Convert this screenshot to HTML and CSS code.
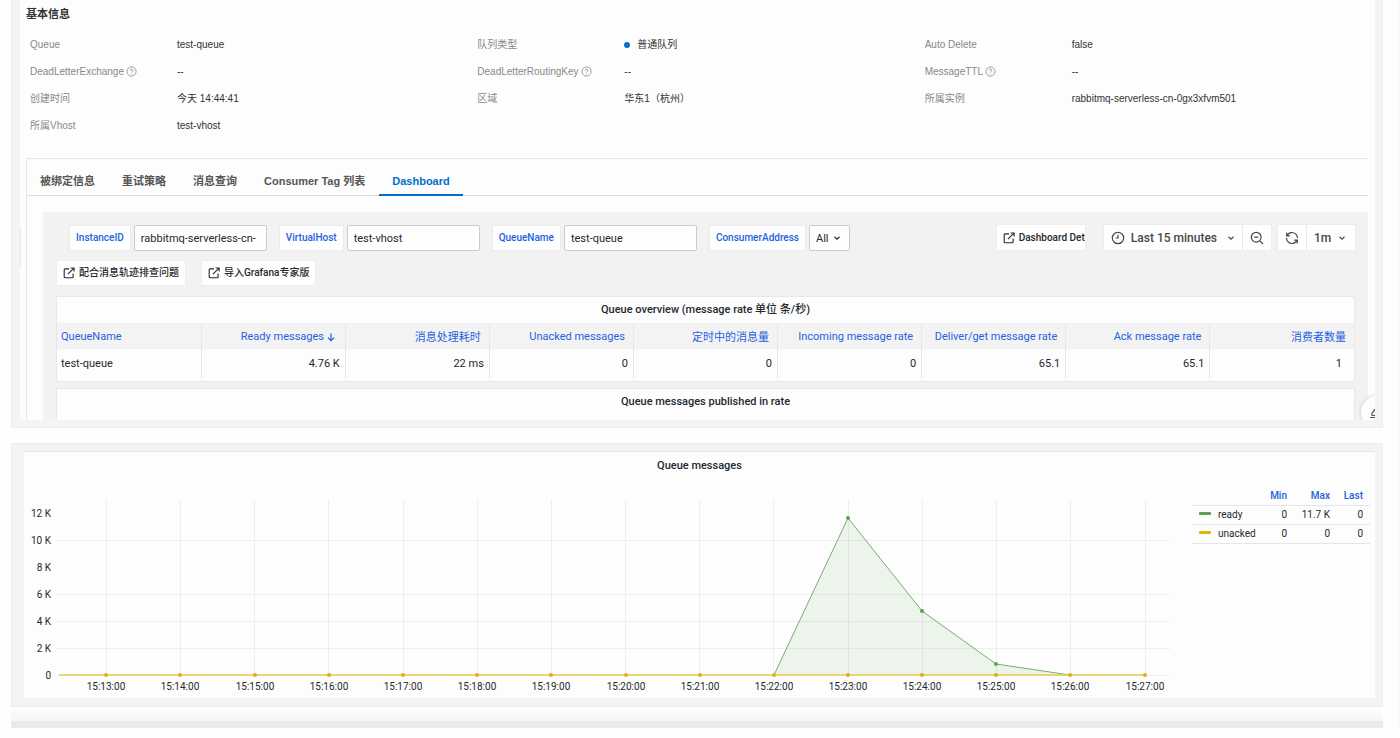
FILE: index.html
```html
<!DOCTYPE html>
<html lang="zh-CN">
<head>
<meta charset="utf-8">
<title>Queue Dashboard</title>
<link rel="stylesheet" href="styles.css">
</head>
<body>
<svg class="defs" width="0" height="0" aria-hidden="true">
  <symbol id="help" viewBox="0 0 12 12"><circle cx="6" cy="6" r="5"/><path d="M4.500 4.900c0-1.900 3-1.900 3 0 0 1-1.500 1.100-1.500 2.100M6 8.100v.8"/></symbol>
  <symbol id="ext" viewBox="0 0 12 12"><path d="M6 1.900H2.200c-.6 0-1 .4-1 1v6.900c0 .6.4 1 1 1h6.900c.6 0 1-.4 1-1V6.400M7.600 1h3.500v3.500M11 1.100 4.900 7.200"/></symbol>
  <symbol id="chev" viewBox="0 0 8 8"><path d="M1.500 2.800 4 5.200l2.500-2.400"/></symbol>
  <symbol id="clock" viewBox="0 0 14 14"><circle cx="7" cy="7" r="5.700"/><path d="M7 3.700V7H4.600"/></symbol>
  <symbol id="zoomout" viewBox="0 0 14 14"><circle cx="6.200" cy="6.200" r="4.900"/><path d="M4.200 6.200h4M9.800 9.800l3.200 3.200"/></symbol>
  <symbol id="sync" viewBox="0 0 14 14"><path d="M1.700 1.500v3.300h3.200M2 4.700C3.800.9 9 .4 11.500 3.800c.7 1 1 2 1 3.200M12.300 12.500V9.200H9.100M12 9.300C10.200 13.100 5 13.600 2.500 10.200c-.7-1-1-2-1-3.200"/></symbol>
</svg>
<div class="page">
  <main class="frame frame-top">
    <div class="sheet">
      <h1 class="title">基本信息</h1>
      <dl class="info">
        <div class="pair"><dt>Queue</dt><dd>test-queue</dd></div>
        <div class="pair"><dt>队列类型</dt><dd><i class="status"></i>普通队列</dd></div>
        <div class="pair"><dt>Auto Delete</dt><dd>false</dd></div>
        <div class="pair"><dt>DeadLetterExchange <svg class="icon icon-help"><use href="#help"/></svg></dt><dd>--</dd></div>
        <div class="pair"><dt>DeadLetterRoutingKey <svg class="icon icon-help"><use href="#help"/></svg></dt><dd>--</dd></div>
        <div class="pair"><dt>MessageTTL <svg class="icon icon-help"><use href="#help"/></svg></dt><dd>--</dd></div>
        <div class="pair"><dt>创建时间</dt><dd>今天 14:44:41</dd></div>
        <div class="pair"><dt>区域</dt><dd>华东1（杭州）</dd></div>
        <div class="pair"><dt>所属实例</dt><dd>rabbitmq-serverless-cn-0gx3xfvm501</dd></div>
        <div class="pair"><dt>所属Vhost</dt><dd>test-vhost</dd></div>
      </dl>
      <section class="card">
        <nav class="tabs" role="tablist">
          <button class="tab" role="tab">被绑定信息</button>
          <button class="tab" role="tab">重试策略</button>
          <button class="tab" role="tab">消息查询</button>
          <button class="tab" role="tab">Consumer Tag 列表</button>
          <button class="tab tab-on" role="tab" aria-selected="true">Dashboard</button>
        </nav>
        <div class="grafana">
          <div class="toolbar">
            <div class="vars">
              <div class="var"><label for="v1">InstanceID</label><input id="v1" value="rabbitmq-serverless-cn-"></div>
              <div class="var"><label for="v2">VirtualHost</label><input id="v2" value="test-vhost"></div>
              <div class="var"><label for="v3">QueueName</label><input id="v3" value="test-queue"></div>
              <div class="var"><label for="v4">ConsumerAddress</label><span class="pick pick-box"><select id="v4"><option>All</option></select><svg class="icon icon-chev"><use href="#chev"/></svg></span></div>
            </div>
            <div class="tools">
              <a class="link link-cut" href="#"><svg class="icon icon-ext"><use href="#ext"/></svg>Dashboard Det</a>
              <div class="group">
                <button class="tool tool-time"><svg class="icon icon-tool"><use href="#clock"/></svg>Last 15 minutes<svg class="icon icon-chev"><use href="#chev"/></svg></button>
                <button class="tool" aria-label="Zoom out"><svg class="icon icon-tool"><use href="#zoomout"/></svg></button>
              </div>
              <div class="group">
                <button class="tool" aria-label="Refresh"><svg class="icon icon-tool"><use href="#sync"/></svg></button>
                <span class="pick"><select aria-label="Refresh interval"><option>1m</option></select><svg class="icon icon-chev"><use href="#chev"/></svg></span>
              </div>
            </div>
          </div>
          <div class="links">
            <a class="link" href="#"><svg class="icon icon-ext"><use href="#ext"/></svg>配合消息轨迹排查问题</a>
            <a class="link" href="#"><svg class="icon icon-ext"><use href="#ext"/></svg>导入Grafana专家版</a>
          </div>
          <section class="panel panel-table">
            <h2 class="panel-title">Queue overview (message rate 单位 条/秒)</h2>
            <table class="overview">
              <thead><tr><th>QueueName</th><th>Ready messages <svg class="icon icon-sort" viewBox="0 0 8 10"><path d="M4 1.500v7M1 5.700l3 3 3-3"/></svg></th><th>消息处理耗时</th><th>Unacked messages</th><th>定时中的消息量</th><th>Incoming message rate</th><th>Deliver/get message rate</th><th>Ack message rate</th><th>消费者数量</th></tr></thead>
              <tbody><tr><td>test-queue</td><td>4.76 K</td><td>22 ms</td><td>0</td><td>0</td><td>0</td><td>65.1</td><td>65.1</td><td>1</td></tr></tbody>
            </table>
          </section>
          <section class="panel panel-cut">
            <h2 class="panel-title">Queue messages published in rate</h2>
          </section>
        </div>
      </section>
      <span class="handle"></span>
      <button class="float" aria-label="Feedback"><svg class="icon icon-float" viewBox="0 0 14 14"><path d="M1 12.500h12M3 10.500V8l5.500-6.500 3 2.500L6 10.500z"/></svg></button>
    </div>
  </main>

  <section class="frame frame-chart">
    <div class="chart-panel">
      <h2 class="panel-title">Queue messages</h2>
      <div class="chart-body">
        <svg class="chart" viewBox="0 0 1161 216" role="img" aria-label="Queue messages">
          <path class="grid" d="M33 60.500H1146M33 114.500H1146M33 141.500H1146M33 168.500H1146M33 195.500H1146M82.500 20V195M156.500 20V195M230.500 20V195M304.500 20V195M379.500 20V195M453.500 20V195M527.500 20V195M601.500 20V195M675.500 20V195M749.500 20V195M824.500 20V195M898.500 20V195M972.500 20V195M1046.500 20V195M1121.500 20V195"/>
          <path class="area" d="M750 195 824 38 898 131 972 184 1046 195z"/>
          <path class="line-ready" d="M750 195 824 38 898 131 972 184 1046 195"/>
          <g class="dots-ready"><circle cx="824" cy="38" r="2"/><circle cx="898" cy="131" r="2"/><circle cx="972" cy="184" r="2"/></g>
          <path class="line-unacked" d="M35 195H1121"/>
          <g class="dots-unacked"><circle cx="82" cy="195" r="2"/><circle cx="156" cy="195" r="2"/><circle cx="231" cy="195" r="2"/><circle cx="305" cy="195" r="2"/><circle cx="379" cy="195" r="2"/><circle cx="453" cy="195" r="2"/><circle cx="527" cy="195" r="2"/><circle cx="602" cy="195" r="2"/><circle cx="676" cy="195" r="2"/><circle cx="750" cy="195" r="2"/><circle cx="824" cy="195" r="2"/><circle cx="898" cy="195" r="2"/><circle cx="972" cy="195" r="2"/><circle cx="1046" cy="195" r="2"/><circle cx="1121" cy="195" r="2"/></g>
          <g class="axis axis-y"><text x="27" y="37">12 K</text><text x="27" y="64">10 K</text><text x="27" y="91">8 K</text><text x="27" y="118">6 K</text><text x="27" y="145">4 K</text><text x="27" y="172">2 K</text><text x="27" y="199">0</text></g>
          <g class="axis axis-x"><text x="82" y="210">15:13:00</text><text x="156" y="210">15:14:00</text><text x="231" y="210">15:15:00</text><text x="305" y="210">15:16:00</text><text x="379" y="210">15:17:00</text><text x="453" y="210">15:18:00</text><text x="527" y="210">15:19:00</text><text x="602" y="210">15:20:00</text><text x="676" y="210">15:21:00</text><text x="750" y="210">15:22:00</text><text x="824" y="210">15:23:00</text><text x="898" y="210">15:24:00</text><text x="972" y="210">15:25:00</text><text x="1046" y="210">15:26:00</text><text x="1121" y="210">15:27:00</text></g>
        </svg>
        <table class="legend">
          <thead><tr><th></th><th>Min</th><th>Max</th><th>Last</th></tr></thead>
          <tbody>
            <tr><td><i class="swatch swatch-ready"></i>ready</td><td>0</td><td>11.7 K</td><td>0</td></tr>
            <tr><td><i class="swatch swatch-unacked"></i>unacked</td><td>0</td><td>0</td><td>0</td></tr>
          </tbody>
        </table>
      </div>
    </div>
  </section>
  <div class="fade"></div>
  <div class="strip"></div>
</div>
</body>
</html>
```
FILE: styles.css
```css
* { box-sizing: border-box; }
body { margin: 0; background: #fefefe; color: #2b2d31; font-family: "Liberation Sans", "Noto Sans CJK SC", sans-serif; font-size: 10px; }
h1, h2, dl, dd { margin: 0; }
button, input, select { font: inherit; color: inherit; margin: 0; }
.defs { position: absolute; }
.icon { fill: none; stroke: currentColor; stroke-width: 1.2; flex: none; }
.page { margin-right: 1px; padding: 0 15px 0 11px; border-right: 1px solid #f3f3f5; }

.frame { background: #f4f4f4; border: 1px solid #ededed; }
.frame-top { border-top: 0; padding: 0 7px 7px 8px; }
.sheet { position: relative; overflow: hidden; background: #fdfdfd; padding: 5px 7px 0 6px; }
.title { font-size: 11px; line-height: 18px; font-weight: 700; color: #333; }
.info { display: grid; grid-template-columns: repeat(3, 1fr); grid-auto-rows: 27px; padding: 8px 0 0 4px; margin-right: -4px; }
.pair { display: flex; align-items: center; line-height: 16px; }
.pair dt { flex: 0 0 147px; display: flex; align-items: center; gap: 2px; color: #888; }
.pair dd { display: flex; align-items: center; color: #333; }
.icon-help { width: 11px; height: 11px; stroke-width: 0.9; }
.status { width: 6px; height: 6px; border-radius: 50%; background: #0a6ccc; margin-right: 7px; }

.card { margin-top: 19px; border-top: 1px solid #e4e4e4; border-left: 1px solid #e6e6e6; }
.tabs { display: flex; gap: 1px; height: 37px; border-bottom: 1px solid #dedede; }
.tab { height: 37px; padding: 9px 13px 0; border: 0; border-bottom: 2px solid transparent; background: none; font-size: 11px; line-height: 26px; font-weight: 700; color: #555; }
.tab-on { color: #0070cc; border-bottom-color: #0070cc; }

.grafana { margin: 16px 0 0 16px; padding: 13px 13px 0 14px; background: #f2f2f2; font-family: Roboto, "Noto Sans CJK SC", sans-serif; font-size: 11px; color: #24292e; }
.toolbar { display: flex; justify-content: space-between; }
.vars { display: flex; gap: 12px; padding-left: 12px; }
.var { display: flex; gap: 3px; }
.var label { height: 26px; padding: 0 6px; border: 1px solid #ebebeb; background: #fefefe; font-size: 10px; line-height: 24px; font-weight: 500; color: #1f62e0; }
.var input { width: 133px; height: 26px; padding: 0 6px; border: 1px solid #ccc; border-radius: 2px; background: #fefefe; }
.pick { position: relative; display: flex; }
.pick select { appearance: none; height: 25px; padding: 0 23px 0 7px; border: 0; background: #fefefe; color: #45484c; font-size: 12px; font-weight: 500; }
.pick-box select { height: 26px; padding: 0 20px 0 6px; border: 1px solid #ccc; border-radius: 2px; font-size: 11px; font-weight: 400; color: #24292e; }
.pick .icon-chev { position: absolute; right: 9px; top: 9px; pointer-events: none; }
.icon-chev { width: 8px; height: 8px; }
.tools { display: flex; gap: 7px; color: #45484c; }
.link { display: inline-flex; align-items: center; gap: 4px; height: 24px; padding: 0 6px; background: #fefefe; box-shadow: 0 0 1px #d8d8d8; font-size: 10px; line-height: 12px; font-weight: 500; color: #24292e; text-decoration: none; white-space: nowrap; }
.link-cut { height: 25px; padding-right: 0; margin-right: 12px; }
.icon-ext { width: 12px; height: 12px; stroke-width: 1.1; }
.group { display: flex; height: 25px; box-shadow: 0 0 1px #ccc; }
.tool { display: flex; align-items: center; padding: 0 7px; border: 0; border-right: 1px solid #e8e8e8; background: #fefefe; font-size: 12px; font-weight: 500; }
.group .tool:last-child { border-right: 0; }
.tool-time { gap: 6px; }
.tool-time .icon-chev { margin-left: 4px; }
.icon-tool { width: 14px; height: 14px; }
.links { display: flex; gap: 17px; margin: 10px 0 11px; }

.panel { background: #fdfdfd; border: 1px solid #e8e8e8; border-radius: 2px; margin-left: -1px; }
.panel-table { padding-bottom: 3px; }
.panel-title { font-family: Roboto, "Noto Sans CJK SC", sans-serif; font-size: 11px; line-height: 26px; font-weight: 500; text-align: center; color: #24292e; }
.panel-cut { margin-top: 6px; border-bottom: 0; padding-bottom: 5px; }
.overview { width: 100%; table-layout: fixed; border-collapse: collapse; }
.overview th, .overview td { border-right: 1px solid #e6e6e6; text-align: right; white-space: nowrap; }
.overview th { height: 26px; padding: 0 8px 0 0; background: #f3f3f3; font-weight: 400; color: #1f62e0; }
.overview td { height: 29px; padding: 0 5px 0 0; }
.overview th:first-child, .overview td:first-child { padding-left: 4px; text-align: left; }
.overview th:last-child, .overview td:last-child { border-right: 0; }
.overview td:last-child { padding-right: 12px; }
.icon-sort { width: 8px; height: 10px; margin-right: 2px; vertical-align: -2px; }
.handle { position: absolute; left: 0; top: 228px; width: 1px; height: 38px; background: #e6e6e6; }
.float { position: absolute; right: -18px; bottom: -8px; width: 32px; height: 32px; padding: 0 0 0 8px; border: 0; border-radius: 50%; background: #fefefe; box-shadow: 0 0 4px #ccc; color: #555; }
.icon-float { display: block; width: 14px; height: 14px; }

.frame-chart { margin-top: 15px; padding: 7px 7px 8px 12px; }
.chart-panel { background: #fdfdfd; border-top: 1px solid #e6e6e6; }
.chart-panel .panel-title { line-height: 28px; }
.chart-body { display: grid; grid-template-columns: 1fr 178px; gap: 7px; align-items: start; padding-right: 5px; }
.chart { display: block; width: 100%; height: auto; margin-bottom: 2px; }
.grid { stroke: #eee; fill: none; }
.area { fill: #56a64b; fill-opacity: 0.1; }
.line-ready { fill: none; stroke: #73b26b; }
.dots-ready { fill: #56a64b; }
.line-unacked { fill: none; stroke: #ebc94e; stroke-width: 1.5; }
.dots-unacked { fill: #dcae1c; }
.axis { font-family: Roboto, sans-serif; font-size: 10px; fill: #24292e; }
.axis-y { text-anchor: end; }
.axis-x { text-anchor: middle; }
.legend { margin-top: 6px; border-collapse: collapse; table-layout: fixed; width: 100%; font-family: Roboto, sans-serif; font-size: 10px; color: #24292e; }
.legend tr { border-bottom: 1px solid #e6e6e6; }
.legend th, .legend td { height: 19px; padding: 0; text-align: right; }
.legend th { color: #1f62e0; font-weight: 500; }
.legend th:nth-child(2) { width: 24px; }
.legend th:nth-child(3) { width: 43px; }
.legend th:nth-child(4) { width: 40px; }
.legend td:first-child { padding-left: 7px; text-align: left; }
.legend th:last-child, .legend td:last-child { padding-right: 7px; }
.swatch { display: inline-block; width: 12px; height: 3px; border-radius: 1px; margin-right: 7px; vertical-align: 3px; }
.swatch-ready { background: #56a64b; }
.swatch-unacked { background: #e0b400; }
.fade { height: 14px; background: linear-gradient(#fefefe, #f6f6f6); }
.strip { height: 7px; background: #eaeaea; }
```
